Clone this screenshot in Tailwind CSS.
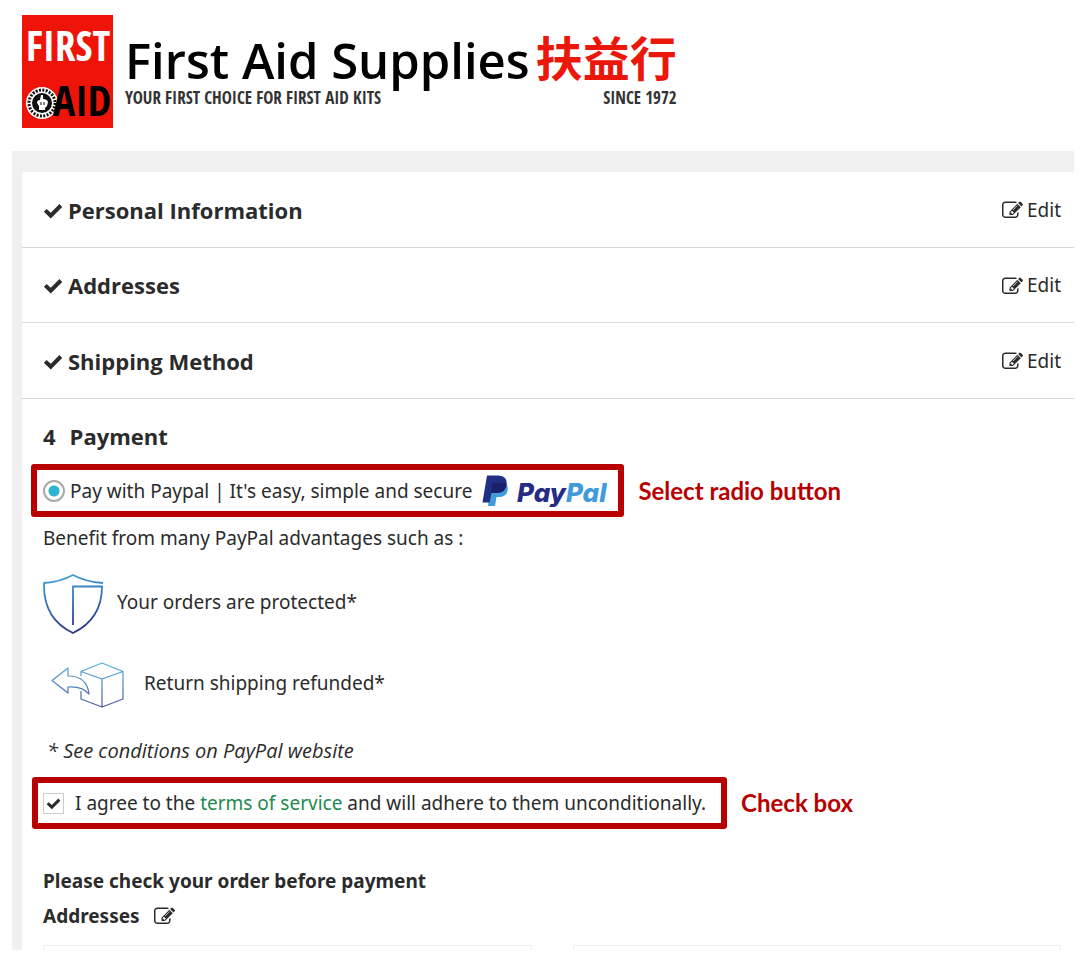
<!DOCTYPE html>
<html lang="en">
<head>
<meta charset="utf-8">
<meta name="viewport" content="width=device-width, initial-scale=1">
<title>First Aid Supplies – Checkout</title>
<script src="https://cdn.jsdelivr.net/npm/@tailwindcss/browser@4"></script>
</head>
<body class="bg-white font-['Noto_Sans','Open_Sans',sans-serif] text-[19px] leading-7 text-[#2b2b2b]">

<svg class="hidden" aria-hidden="true">
  <symbol id="check" viewBox="0 0 18 16"><path d="M.8 9.600 3.300 7 7 10.400 14.800 2.600 17.300 5.200 7 15.600Z" fill="currentColor"/></symbol>
  <symbol id="edit" viewBox="0 0 1792 1792"><path fill="currentColor" d="M888 1184l116-116-152-152-116 116v56h96v96h56zm440-720q-16-16-33 1l-350 350q-17 17-1 33t33-1l350-350q17-17 1-33zm80 594v190q0 119-84.500 203.500t-203.500 84.500h-832q-119 0-203.500-84.500t-84.500-203.500v-832q0-119 84.500-203.500t203.500-84.500h832q63 0 117 25 15 7 18 23 3 17-9 29l-49 49q-14 14-32 8-23-6-45-6h-832q-66 0-113 47t-47 113v832q0 66 47 113t113 47h832q66 0 113-47t47-113v-126q0-13 9-22l64-64q15-15 35-7t20 29zm-96-738l288 288-672 672h-288v-288zm444 132l-92 92-288-288 92-92q28-28 68-28t68 28l152 152q28 28 28 68t-28 68z"/></symbol>
</svg>

<header class="flex items-start gap-3 pt-[15px] pl-[22px]">
  <svg class="h-[113px] w-[91px] shrink-0" viewBox="0 0 91 113" role="img" aria-label="First Aid">
    <rect width="91" height="113" fill="#ee1409"/>
    <text x="46" y="46" text-anchor="middle" font-family="'Open Sans Condensed','Roboto Condensed','Liberation Sans Narrow',sans-serif" font-weight="700" font-size="41" fill="#fff">FIRST</text>
    <circle cx="20" cy="88" r="16" fill="#fff"/>
    <circle cx="20" cy="88" r="13" fill="none" stroke="#111" stroke-width="3" stroke-dasharray="2 1.400"/>
    <circle cx="20" cy="88" r="10" fill="#111"/>
    <path d="M17 95v-4l-2-3q0-3 3-3l1-5h2v4q4 0 5 3l-1 4-2 2v2z" fill="#fff"/>
    <path d="M19 87v3M22 87v3" stroke="#111" stroke-width="1"/>
    <text x="60" y="101" text-anchor="middle" font-family="'Open Sans Condensed','Roboto Condensed','Liberation Sans Narrow',sans-serif" font-weight="700" font-size="42" fill="#000">AID</text>
  </svg>
  <div class="pt-[18px]">
    <div class="flex items-start gap-[6px] whitespace-nowrap">
      <h1 class="font-['Open_Sans',sans-serif] text-[49px] leading-[54px] font-semibold text-black">First Aid Supplies</h1>
      <span lang="zh-Hant" class="font-['Noto_Sans_CJK_TC',sans-serif] text-[47px] leading-[46px] font-bold text-[#ec170b]">扶益行</span>
    </div>
    <div class="flex justify-between font-['Open_Sans_Condensed','Roboto_Condensed','Liberation_Sans_Narrow',sans-serif] text-[17px] leading-[22px] font-bold text-[#333]">
      <span>YOUR FIRST CHOICE FOR FIRST AID KITS</span><span>SINCE 1972</span>
    </div>
  </div>
</header>

<main class="mt-[23px] mr-[18px] ml-3 bg-[#f0f0f0] pt-[21px] pl-[10px]">
  <div class="bg-white">
    <section class="flex h-[76px] items-center justify-between border-b border-[#d8d8d8] pr-[13px] pl-[21px]">
      <h2 class="flex items-center gap-[5px] font-['Open_Sans',sans-serif] text-[22px] font-bold"><svg class="h-[18px] w-5"><use href="#check"/></svg>Personal Information</h2>
      <a href="#" class="flex items-center gap-1"><svg class="mt-[2px] size-[21px]"><use href="#edit"/></svg>Edit</a>
    </section>
    <section class="flex h-[75px] items-center justify-between border-b border-[#d8d8d8] pr-[13px] pl-[21px]">
      <h2 class="flex items-center gap-[5px] font-['Open_Sans',sans-serif] text-[22px] font-bold"><svg class="h-[18px] w-5"><use href="#check"/></svg>Addresses</h2>
      <a href="#" class="flex items-center gap-1"><svg class="mt-[2px] size-[21px]"><use href="#edit"/></svg>Edit</a>
    </section>
    <section class="flex h-[76px] items-center justify-between border-b border-[#d8d8d8] pr-[13px] pl-[21px]">
      <h2 class="flex items-center gap-[5px] font-['Open_Sans',sans-serif] text-[22px] font-bold"><svg class="h-[18px] w-5"><use href="#check"/></svg>Shipping Method</h2>
      <a href="#" class="flex items-center gap-1"><svg class="mt-[2px] size-[21px]"><use href="#edit"/></svg>Edit</a>
    </section>

    <section class="pt-[23px] pr-[13px] pl-[21px]">
      <h2 class="flex gap-[14px] font-['Open_Sans',sans-serif] text-[22px] font-bold"><span>4</span><span>Payment</span></h2>

      <div class="mt-[14px] -ml-3 flex items-center gap-[14px]">
        <div class="flex h-[53px] items-center rounded-[3px] border-[6px] border-[#b80000] pr-[11px] pl-[6px]">
          <input id="paypal" type="radio" name="payment" checked class="mr-[5px] size-[22px] shrink-0 appearance-none rounded-full border-2 border-[#a9a9a9] bg-white bg-[radial-gradient(circle,#2fb5d2_5px,transparent_6px)]">
          <label for="paypal" class="flex items-center gap-[10px] whitespace-nowrap">Pay with Paypal | It's easy, simple and secure
            <svg class="h-8 w-[125px]" viewBox="0 0 125 32" role="img" aria-label="PayPal">
              <path d="M9 8H21.500Q27 9.500 25.500 16 24 22 17 22H14.500L13 31H6Z" fill="#3f9bdc"/>
              <path d="M5 .5H16.500Q26 1 24.500 10 23 18 13.500 18H9.500L7.500 27.500H.5Z" fill="#1f2f86"/>
              <path d="M10.500 8H24.700Q24.500 18 14 18H9Z" fill="#1a2069"/>
              <text x="35" y="27" font-family="Inter,sans-serif" font-weight="800" font-style="italic" font-size="26" fill="#242c86">Pay<tspan fill="#3f9bdc">Pal</tspan></text>
            </svg>
          </label>
        </div>
        <p class="font-[Lato,sans-serif] text-2xl font-bold whitespace-nowrap text-[#b80000]">Select radio button</p>
      </div>

      <p class="mt-[7px]">Benefit from many PayPal advantages such as :</p>

      <div class="mt-[22px] flex items-center gap-[14px]">
        <svg class="h-[60px] w-[60px]" viewBox="0 0 60 60" fill="none" stroke="url(#shieldBlue)" stroke-width="1.800">
          <defs><linearGradient id="shieldBlue" gradientUnits="userSpaceOnUse" x1="0" y1="0" x2="10" y2="60"><stop stop-color="#4aa5dc"/><stop offset=".5" stop-color="#3474b4"/><stop offset="1" stop-color="#2b3486"/></linearGradient></defs>
          <path d="M60 9Q43 8 30 1 17 8 1 9 0 45 30 59 59 45 59 12.500H30V51"/>
        </svg>
        <p class="pb-1">Your orders are protected*</p>
      </div>

      <div class="mt-[28px] flex items-center gap-5 pl-2">
        <svg class="h-[46px] w-[73px]" viewBox="0 0 73 46" fill="none" stroke="url(#boxBlue)" stroke-width="1.200" stroke-linejoin="round">
          <defs><linearGradient id="boxBlue" gradientUnits="userSpaceOnUse" x1="0" y1="0" x2="0" y2="46"><stop stop-color="#55b4e0"/><stop offset="1" stop-color="#4a559c"/></linearGradient></defs>
          <path d="M30 14V9.500L51 1 72 9.500V37L51 45 30 37V29M30 9.500 51 17 72 9.500M51 17V45"/>
          <path d="M1 18.500 17 6V14Q36 14 38 32 31 24 17 25V31Z"/>
        </svg>
        <p class="pb-1">Return shipping refunded*</p>
      </div>

      <p class="mt-[29px] pl-1 font-['Open_Sans',sans-serif] text-xl leading-7 italic">* See conditions on PayPal website</p>

      <div class="mt-3 -ml-[11px] flex items-center gap-[14px]">
        <div class="flex h-[52px] items-center rounded-[3px] border-[6px] border-[#b80000] pr-[15px] pl-[5px]">
          <span class="relative mr-[11px] flex size-[21px] shrink-0">
            <input id="terms" type="checkbox" checked class="size-[21px] appearance-none border border-[#ccc] bg-white">
            <svg class="pointer-events-none absolute top-[2px] left-[3px] h-4 w-[15px]"><use href="#check"/></svg>
          </span>
          <label for="terms" class="whitespace-nowrap">I agree to the <a href="#" class="text-[#208a4e]">terms of service</a> and will adhere to them unconditionally.</label>
        </div>
        <p class="font-[Lato,sans-serif] text-2xl font-bold whitespace-nowrap text-[#b80000]">Check box</p>
      </div>

      <h3 class="mt-[38px] font-bold">Please check your order before payment</h3>
      <div class="mt-[7px] flex items-center gap-[14px]">
        <h3 class="font-bold">Addresses</h3>
        <a href="#" aria-label="Edit addresses"><svg class="size-[21px]"><use href="#edit"/></svg></a>
      </div>
      <div class="mt-[15px] grid grid-cols-2 gap-[41px]">
        <div class="h-[5px] border border-b-0 border-[#f0f0f0]"></div>
        <div class="h-[5px] border border-b-0 border-[#f0f0f0]"></div>
      </div>
    </section>
  </div>
</main>
</body>
</html>
